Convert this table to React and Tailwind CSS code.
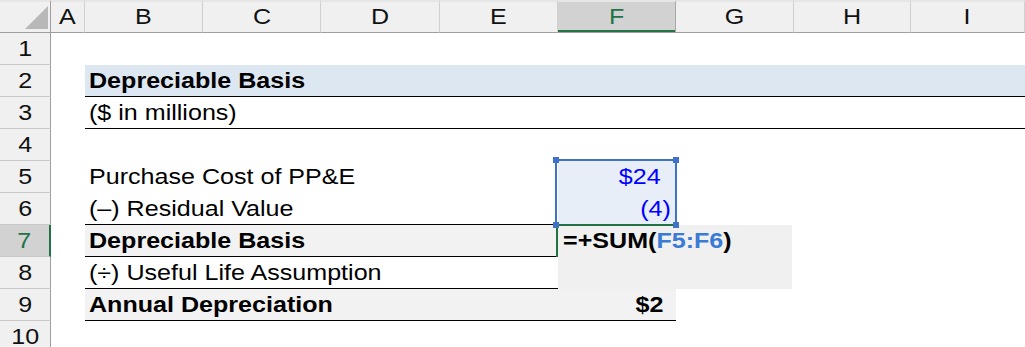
import React from "react";

const COLS = ["A", "B", "C", "D", "E", "F", "G", "H", "I"];

// sheet text is drawn a little wide, so stretch each run horizontally
function Txt({ children, className = "", origin = "origin-left" }) {
	return (
		<span className={`inline-block whitespace-nowrap scale-x-[1.14] ${origin} ${className}`}>
			{children}
		</span>
	);
}

function ColHeader({ label, active }) {
	return (
		<div
			className={`flex items-center justify-center border-t-2 border-t-[#e6e6e6] border-b border-b-[#9e9e9e] ${
				active
					? "bg-[#d2d2d2] text-[#217346] border-r border-r-[#a8a8a8] shadow-[inset_0_-2px_0_#217346]"
					: "bg-[#f0f0f0] text-[#111] border-r border-r-[#d0d0d0]"
			}`}
		>
			<Txt origin="origin-center">{label}</Txt>
		</div>
	);
}

function RowHeader({ n, active }) {
	return (
		<div
			className={`col-start-1 flex items-center justify-center border-b border-b-[#c8c8c8] ${
				active
					? "bg-[#d2d2d2] text-[#217346] border-r-2 border-r-[#217346]"
					: "bg-[#f0f0f0] text-[#111] border-r border-r-[#9e9e9e]"
			}`}
			style={{ gridRowStart: n + 1 }}
		>
			<Txt origin="origin-center">{n}</Txt>
		</div>
	);
}

export default function App() {
	return (
		<div className="w-[1025px] h-[347px] overflow-hidden bg-white font-['Liberation_Sans',Arial,sans-serif] text-[22px] leading-[32px] text-black">
			<div className="grid grid-cols-[51px_34px_118px_118px_119px_118px_118px_118px_117px_1fr] grid-rows-[33px_repeat(10,32px)]">
				{/* corner */}
				<div className="relative bg-[#f0f0f0] border-t-2 border-t-[#e6e6e6] border-b border-b-[#9e9e9e] border-r border-r-[#9e9e9e]">
					<svg className="absolute left-[25px] top-[4px]" width="24" height="24" viewBox="0 0 24 24">
						<polygon points="0,23 23,23 23,0" fill="#b8b8b8" />
					</svg>
				</div>
				{COLS.map((c) => (
					<ColHeader key={c} label={c} active={c === "F"} />
				))}

				{Array.from({ length: 10 }, (_, i) => (
					<RowHeader key={i} n={i + 1} active={i + 1 === 7} />
				))}

				{/* row 2: title band */}
				<div className="col-start-3 col-span-8 row-start-3 bg-[#dde7f1] border-b border-black pl-[4px] font-bold">
					<Txt>Depreciable Basis</Txt>
				</div>

				{/* row 3: units */}
				<div className="col-start-3 col-span-8 row-start-4 border-b border-black pl-[4px]">
					<Txt>($ in millions)</Txt>
				</div>

				{/* rows 5-6 */}
				<div className="col-start-3 col-span-4 row-start-6 pl-[4px]">
					<Txt>Purchase Cost of PP&amp;E</Txt>
				</div>
				<div className="col-start-3 col-span-4 row-start-7 pl-[4px]">
					<Txt>(–) Residual Value</Txt>
				</div>

				{/* selected range F5:F6 */}
				<div className="relative col-start-7 row-start-6 row-span-2 z-20 grid grid-rows-[32px_32px] bg-[#e8eef8] text-[#0000ff] text-right">
					<div className="pr-[15px]">
						<Txt origin="origin-right">$24</Txt>
					</div>
					<div className="pr-[5px]">
						<Txt origin="origin-right">(4)</Txt>
					</div>
					<div className="absolute -left-[3px] -top-[2px] -right-px -bottom-px border-2 border-[#3d72c6]" />
					<div className="absolute -left-[3px] -right-px -bottom-px h-[2px] bg-[#217346]" />
					<div className="absolute -left-[5px] -top-[4px] size-[6px] bg-[#3d72c6]" />
					<div className="absolute -right-[3px] -top-[4px] size-[6px] bg-[#3d72c6]" />
					<div className="absolute -left-[5px] -bottom-[3px] size-[6px] bg-[#3d72c6]" />
					<div className="absolute -right-[3px] -bottom-[3px] size-[6px] bg-[#3d72c6]" />
				</div>

				{/* row 7: subtotal */}
				<div className="col-start-3 col-span-4 row-start-8 -mt-px bg-[#f2f2f2] border-y border-black pl-[4px] font-bold">
					<Txt>Depreciable Basis</Txt>
				</div>

				{/* in-cell editor on F7 */}
				<div className="relative col-start-7 col-span-2 row-start-8 row-span-2 z-10 bg-[#f0f0f0] pl-[5px] mr-[2px] font-bold">
					<div className="absolute -left-[2px] -top-[1px] w-[2px] h-[33px] bg-[#217346]" />
					<Txt>
						=+SUM(<span className="text-[#3a7bd5]">F5:F6</span>)
					</Txt>
				</div>

				{/* row 8 */}
				<div className="col-start-3 col-span-4 row-start-9 pl-[4px]">
					<Txt>(÷) Useful Life Assumption</Txt>
				</div>

				{/* row 9: total */}
				<div className="col-start-3 col-span-5 row-start-10 -mt-px flex justify-between bg-[#f2f2f2] border-y border-black pl-[4px] pr-[13px] font-bold">
					<Txt>Annual Depreciation</Txt>
					<Txt origin="origin-right">$2</Txt>
				</div>
			</div>
		</div>
	);
}
